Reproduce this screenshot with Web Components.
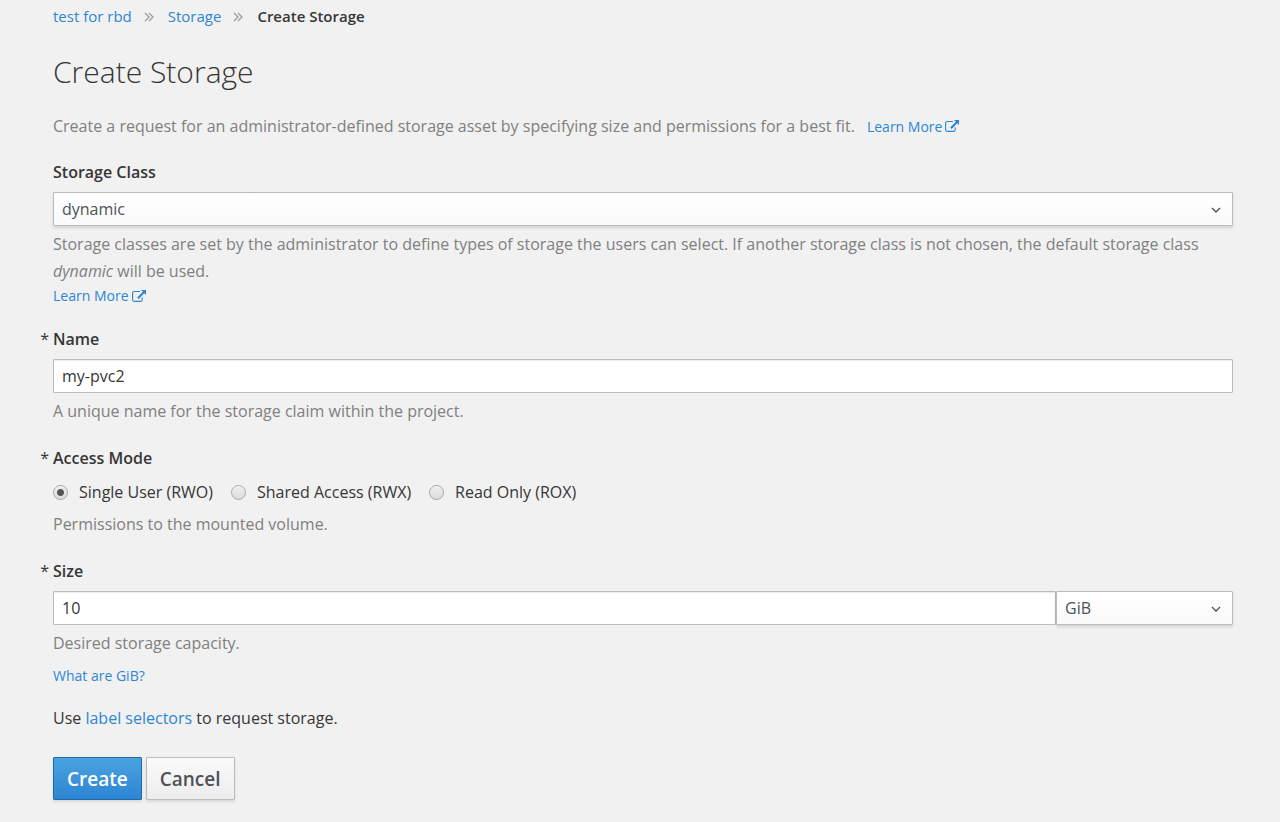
<!DOCTYPE html>
<html lang="en">
<head>
<meta charset="utf-8">
<title>Create Storage</title>
<style>
  html { background: #f1f1f1; }
  body {
    margin: 0;
    color: #363636;
    font: 400 16px/27px "Open Sans", "Noto Sans", sans-serif;
    --link: #2d87d3;
    --muted: #808080;
    --edge: #bbb;
  }
</style>
</head>
<body>
<storage-page></storage-page>

<script>
const define = (name, html, setup) => {
  const template = document.createElement('template');
  template.innerHTML = html;
  customElements.define(name, class extends HTMLElement {
    connectedCallback() {
      if (this.shadowRoot) return;
      const root = this.attachShadow({ mode: 'open' });
      root.append(template.content.cloneNode(true));
      if (setup) setup(this, root);
    }
  });
};

const controlStyles = `
  :host { display: block; }
  * { box-sizing: border-box; }
  .label { display: block; position: relative; width: fit-content; margin: 0 0 8px; padding: 0; font-size: 16px; line-height: 24px; font-weight: 600; }
  :host([required]) .label::before { content: "*"; position: absolute; right: 100%; top: 0; margin-right: 4px; font-weight: 400; }
  .help { margin-top: 5px; color: var(--muted); }
  input[type=text], select {
    display: block; width: 100%; min-width: 0; height: 34px; margin: 0;
    border: 1px solid var(--edge); border-radius: 1px; background: #fff;
    font: inherit; line-height: 24px; color: #363636;
  }
  input[type=text] { box-shadow: inset 0 1px 1px rgba(0,0,0,.08); padding: 0 8px; }
  .pick { position: relative; }
  select { appearance: none; padding: 0 8px; color: #4d5258; background: linear-gradient(#fff, #fafafa); box-shadow: 0 2px 3px rgba(3,3,3,.12); }
  .pick svg { position: absolute; right: 12px; top: 14px; width: 10px; height: 8px; pointer-events: none; }
`;
const chevron = `<svg viewBox="0 0 10 8" aria-hidden="true"><path d="M1 2l4 4 4-4" fill="none" stroke="#4d5258" stroke-width="1.3"/></svg>`;

define('crumb-trail', `
  <style>
    :host { display: block; font-size: 15px; line-height: 24px; }
    ol { display: flex; margin: 0; padding: 0; list-style: none; }
    li { display: flex; align-items: center; }
    li:last-child { font-weight: 600; }
    a { color: var(--link); text-decoration: none; }
    svg { width: 10px; height: 10px; margin: 2px 14px 0 12px; }
  </style>
  <nav aria-label="Breadcrumb"><ol>
    <li><a href="#project">test for rbd</a><svg viewBox="0 0 10 10" aria-hidden="true"><path d="M1 1l4 4-4 4M5 1l4 4-4 4" fill="none" stroke="#9c9c9c" stroke-width="1.3"/></svg></li>
    <li><a href="#storage">Storage</a><svg viewBox="0 0 10 10" aria-hidden="true"><path d="M1 1l4 4-4 4M5 1l4 4-4 4" fill="none" stroke="#9c9c9c" stroke-width="1.3"/></svg></li>
    <li aria-current="page">Create Storage</li>
  </ol></nav>`);

define('learn-more', `
  <style>
    :host { display: inline-block; font-size: 14px; line-height: 21px; }
    a { display: flex; align-items: center; gap: 3px; width: fit-content; color: var(--link); text-decoration: none; }
    svg { width: 14px; height: 12px; }
  </style>
  <a href="#docs"><slot></slot><svg viewBox="0 0 14 12" aria-hidden="true">
    <path d="M8 1.5H2.2Q.6 1.5.6 3v6.8q0 1.6 1.6 1.6h6.4q1.6 0 1.6-1.6V7.500" fill="none" stroke="currentColor" stroke-width="1.1"/>
    <path d="M9 0h5v5l-1.700-1.700-5.600 5.600L5.200 7.400l5.600-5.700z" fill="currentColor"/>
  </svg></a>`);

define('text-field', `
  <style>${controlStyles}</style>
  <label class="label" for="control"></label>
  <input type="text" id="control">
  <div class="help"><slot></slot></div>`,
  (host, root) => {
    root.querySelector('label').textContent = host.getAttribute('label');
    root.querySelector('input').value = host.getAttribute('value');
  });

define('class-field', `
  <style>${controlStyles}</style>
  <label class="label" for="control">Storage Class</label>
  <div class="pick"><select id="control"><option>dynamic</option></select>${chevron}</div>
  <div class="help"><slot></slot></div>`);

define('size-field', `
  <style>${controlStyles}
    .row { display: grid; grid-template-columns: 17fr 3fr; }
  </style>
  <label class="label" for="amount">Size</label>
  <div class="row">
    <input type="text" id="amount" value="10">
    <div class="pick"><select aria-label="Unit"><option>GiB</option><option>MiB</option><option>TiB</option></select>${chevron}</div>
  </div>
  <div class="help"><slot></slot></div>`);

define('access-field', `
  <style>${controlStyles}
    fieldset { margin: 0; padding: 0; border: 0; min-width: 0; }
    .options { display: flex; flex-wrap: wrap; gap: 0 18px; }
    .options label { display: flex; align-items: center; gap: 11px; line-height: 28px; }
    input[type=radio] {
      appearance: none; width: 15px; height: 15px; margin: 0;
      border: 1px solid #a8a8a8; border-radius: 50%;
      background: linear-gradient(#eee, #dcdcdc); box-shadow: inset 0 1px 1px #fff8;
    }
    input:checked { background: radial-gradient(circle, #555 3px, transparent 4px), linear-gradient(#eee, #dcdcdc); }
  </style>
  <fieldset>
    <legend class="label">Access Mode</legend>
    <div class="options">
      <label><input type="radio" name="mode" checked>Single User (RWO)</label>
      <label><input type="radio" name="mode">Shared Access (RWX)</label>
      <label><input type="radio" name="mode">Read Only (ROX)</label>
    </div>
  </fieldset>
  <div class="help"><slot></slot></div>`);

define('action-button', `
  <style>
    :host { display: block; }
    button {
      display: block; height: 43px; margin: 0; padding: 0 13px;
      border: 1px solid var(--edge); border-radius: 1px;
      background: linear-gradient(#fafafa, #ededed); color: #4d5258;
      font: 600 19px/24px "Open Sans", "Noto Sans", sans-serif;
      box-shadow: 0 2px 3px rgba(3,3,3,.1);
    }
    :host([primary]) button { border-color: #1f6aa8; background: linear-gradient(#4aa3df, #2d85d3); color: #fff; }
  </style>
  <button type="button"><slot></slot></button>`);

define('storage-page', `
  <style>
    :host { display: block; padding: 4px 47px 20px 53px; }
    a { color: var(--link); text-decoration: none; }
    h1 { margin: 24px 0 20px; font-size: 30px; line-height: 40px; font-weight: 300; }
    p { margin: 0; }
    .intro { display: flex; align-items: center; gap: 12px; margin-bottom: 20px; line-height: 28px; color: var(--muted); }
    .fields { display: grid; gap: 21px; }
    class-field learn-more { display: block; }
    .units { display: block; width: fit-content; margin: 8px 0 18px; font-size: 14px; line-height: 22px; }
    .actions { display: flex; gap: 4px; margin-top: 25px; }
  </style>
  <crumb-trail></crumb-trail>
  <main>
    <h1>Create Storage</h1>
    <div class="intro"><p>Create a request for an administrator-defined storage asset by specifying size and permissions for a best fit.</p><learn-more>Learn More</learn-more></div>
    <div class="fields">
      <class-field>Storage classes are set by the administrator to define types of storage the users can select. If another storage class is not chosen, the default storage class <i>dynamic</i> will be used.<learn-more>Learn More</learn-more></class-field>
      <text-field required label="Name" value="my-pvc2">A unique name for the storage claim within the project.</text-field>
      <access-field required>Permissions to the mounted volume.</access-field>
      <size-field required>Desired storage capacity.</size-field>
    </div>
    <a class="units" href="#units">What are GiB?</a>
    <p>Use <a href="#selectors">label selectors</a> to request storage.</p>
    <div class="actions"><action-button primary>Create</action-button><action-button>Cancel</action-button></div>
  </main>`);
</script>
</body>
</html>
